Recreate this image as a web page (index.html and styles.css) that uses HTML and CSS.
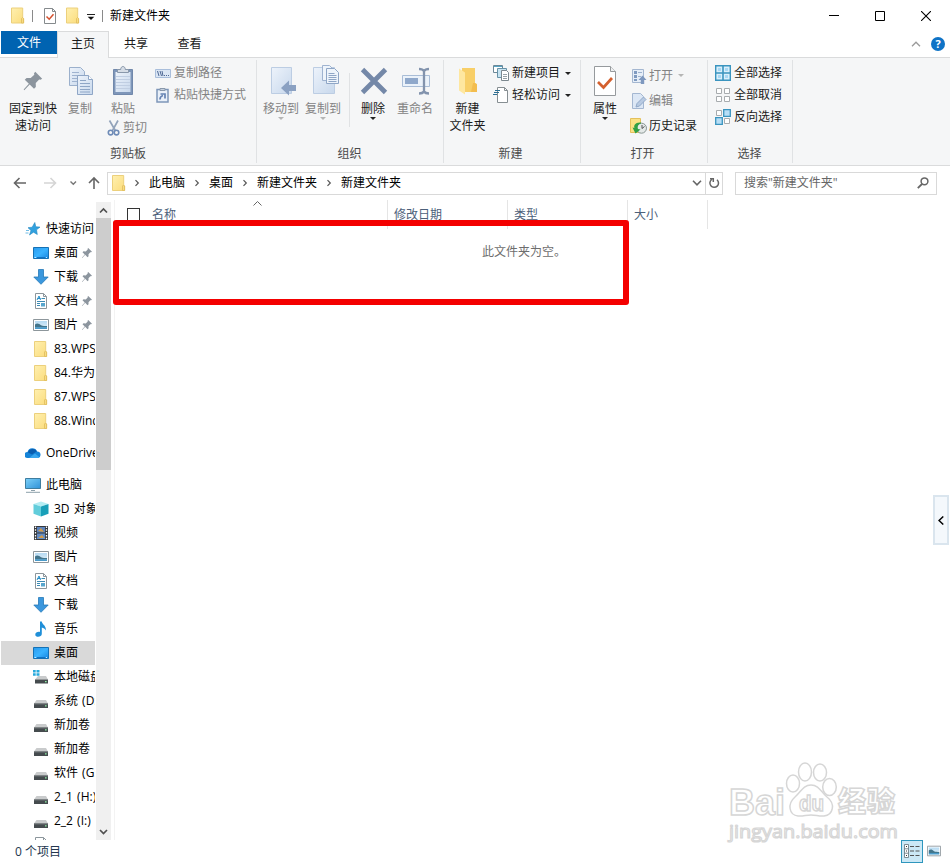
FILE: index.html
```
<!DOCTYPE html>
<html lang="zh-CN">
<head>
    <meta charset="UTF-8">
    <meta name="viewport" content="width=device-width, initial-scale=1.0">
    <title>新建文件夹</title>
    <link rel="stylesheet" href="styles.css">
</head>
<body>
    <!-- Shared icons -->
    <svg class="sprite" width="0" height="0">
        <defs>
            <linearGradient id="gFolder" x1="0" y1="0" x2="1" y2="1">
                <stop offset="0" stop-color="#fff0b0"/><stop offset="1" stop-color="#fbdc7c"/>
            </linearGradient>
            <linearGradient id="gPaper" x1="0" y1="0" x2="1" y2="1">
                <stop offset="0" stop-color="#edf3fb"/><stop offset="1" stop-color="#c8d8ec"/>
            </linearGradient>
            <linearGradient id="gScreen" x1="0" y1="0" x2="1" y2="1">
                <stop offset="0" stop-color="#2b9cee"/><stop offset=".5" stop-color="#39b2ff"/><stop offset="1" stop-color="#1786e0"/>
            </linearGradient>
            <linearGradient id="gPc" x1="0" y1="0" x2="1" y2="1">
                <stop offset="0" stop-color="#7cd0f8"/><stop offset="1" stop-color="#2f92d8"/>
            </linearGradient>
            <linearGradient id="gPic" x1="0" y1="0" x2="0" y2="1">
                <stop offset="0" stop-color="#b5daf3"/><stop offset="1" stop-color="#e6f2f8"/>
            </linearGradient>
        </defs>
        <symbol id="folder" viewBox="0 0 16 16">
            <path d="M1.500.500h11.200v10.500h1v4.500H1.500z" fill="url(#gFolder)" stroke="#ecd07c"/>
            <path d="M11.500 15.500V11l1-1 1 1v4.500z" fill="#f8dc83" stroke="#dfbd5c" stroke-width=".8"/>
        </symbol>
        <symbol id="pin" viewBox="0 0 24 24">
            <path d="M14.500 2l7.500 7.500-1.800 1.200-1.500-.4-3.700 4 .1 4.200-2 1.900-4.700-4.700L2.500 22 1.800 21.300 7.500 15 3 10.600l2-2 4.500.2 3.900-3.700-.3-1.500z" fill="#8c959e"/>
        </symbol>
        <symbol id="desktop" viewBox="0 0 16 16">
            <path d="M.5 2.500h15v11H.5z" fill="url(#gScreen)" stroke="#1571b5"/>
            <path d="M1.500 12.500h13" stroke="#c3e6ff" stroke-dasharray="1.500 1 8 1 1 .5"/>
            <path d="M4 12.500h8" stroke="#1272c4"/>
        </symbol>
        <symbol id="download" viewBox="0 0 16 16">
            <path d="M5.500.500h5V8h4.700L8 15.300.8 8h4.700z" fill="#3b97dd" stroke="#2478b8" stroke-width=".8"/>
        </symbol>
        <symbol id="document" viewBox="0 0 16 16">
            <path d="M2.500.500h8l3 3v12h-11z" fill="#fff" stroke="#8c969c"/>
            <path d="M10.500.500v3h3" fill="none" stroke="#8c969c"/>
            <path d="M4 7l2-4 1.500 4M4.500 5.500h3" fill="none" stroke="#268fc8"/>
            <path d="M8.500 5.500H12M4 8.500h8M4 10.500h3M4 12.500h3" stroke="#3d8bb4"/>
            <path d="M8 10h4v3.500H8z" fill="#57a6ce"/>
        </symbol>
        <symbol id="picture" viewBox="0 0 16 16">
            <path d="M.5 2.500h15v11H.5z" fill="#fff" stroke="#8d969b"/>
            <path d="M2 4h12v8H2z" fill="url(#gPic)"/>
            <path d="M2 7.500c2-2 4-1 6 .7 2 .8 4 .8 6 .8v1.500H2z" fill="#43758b"/>
            <path d="M2 10.200h12V12H2z" fill="#4a9ac9"/>
        </symbol>
        <symbol id="drive" viewBox="0 0 16 16">
            <path d="M3.500 7h9.500L15 10.500H1z" fill="#c9cbcc"/>
            <path d="M1 10.500h14v4.500H1z" fill="#454b4e"/>
            <path d="M1 10.500h14v1H1z" fill="#6b7072"/>
            <path d="M12 12.200h1.600v1.300H12z" fill="#8ef0a4"/>
        </symbol>
        <symbol id="sysdrive" viewBox="0 0 16 16">
            <path d="M5 7h8l2 3.500H2z" fill="#c9cbcc"/>
            <path d="M2 10.500h13v4H2z" fill="#454b4e"/>
            <path d="M12 12h1.600v1.300H12z" fill="#8ef0a4"/>
            <path d="M0 1h2.700v2.500H0zM3.500 1h3v2.500h-3zM0 4.300h2.700v2.500H0zM3.500 4.300h3v2.500h-3z" fill="#28a9dc"/>
        </symbol>
        <symbol id="pageCheck" viewBox="0 0 22 30">
            <path d="M.5.500h16l5 5v24H.5z" fill="#fff" stroke="#969a9d"/>
            <path d="M16.500.500v5h5" fill="#eef0f1" stroke="#969a9d"/>
            <path d="M4 16l5.500 5.500L18 12" fill="none" stroke="#d4602e" stroke-width="2.700"/>
        </symbol>
        <symbol id="chev" viewBox="0 0 8 8">
            <path d="M2.500 1.200L5.300 4 2.500 6.800" fill="none" stroke="#555" stroke-width="1.200"/>
        </symbol>
    </svg>

    <div class="window">
        <div class="titlebar">
            <svg class="title-folder" width="16" height="17"><use href="#folder"/></svg>
            <span class="title-sep"></span>
            <svg class="title-check" width="12" height="16" viewBox="0 0 12 16">
                <path d="M.5.500h8l3 3v12H.5z" fill="#fff" stroke="#858a8d"/>
                <path d="M8.500.500v3h3" fill="none" stroke="#858a8d"/>
                <path d="M2.500 8.500l2.700 2.700 4.300-5" fill="none" stroke="#d4502e" stroke-width="1.500"/>
            </svg>
            <svg class="title-folder2" width="16" height="17"><use href="#folder"/></svg>
            <svg class="title-more" width="8" height="7" viewBox="0 0 8 7"><path d="M0 .5h8" stroke="#222"/><path d="M.7 2.700h6.600L4 6z" fill="#111"/></svg>
            <span class="title-sep"></span>
            <span class="title-text">新建文件夹</span>
            <div class="window-buttons">
                <svg width="10" height="10" viewBox="0 0 10 10"><path d="M0 4.500h10" stroke="#000"/></svg>
                <svg width="10" height="10" viewBox="0 0 10 10"><path d="M.5.500h9v9h-9z" fill="none" stroke="#000"/></svg>
                <svg width="10" height="10" viewBox="0 0 10 10"><path d="M0 0l10 10M10 0L0 10" stroke="#000" stroke-width="1.100"/></svg>
            </div>
        </div>

        <div class="tabs">
            <span class="tab tab-file">文件</span>
            <span class="tab tab-active">主页</span>
            <span class="tab tab-share">共享</span>
            <span class="tab">查看</span>
            <div class="tabs-right">
                <svg width="10" height="6" viewBox="0 0 10 6"><path d="M1 5.200L5 1.200l4 4" fill="none" stroke="#9a9a9a" stroke-width="1.300"/></svg>
                <span class="help">?</span>
            </div>
        </div>

        <div class="ribbon">
            <div class="group group-clipboard">
                <div class="group-body">
                    <div class="big big-pin">
                        <svg width="32" height="32" viewBox="0 0 32 32"><use href="#pin" x="5" y="5" width="22" height="22"/></svg>
                        <span>固定到快<br>速访问</span>
                    </div>
                    <div class="big big-copy disabled">
                        <svg width="32" height="32" viewBox="0 0 32 32">
                            <path d="M5.500 2.500h11l4 4v14h-15z" fill="url(#gPaper)" stroke="#9bb0cc"/>
                            <path d="M8 7.500h7M8 10.500h8M8 13.500h6M8 16.500h5" stroke="#9fb3d0"/>
                            <path d="M13.500 10.500h11l4 4v15h-15z" fill="url(#gPaper)" stroke="#8fa6c6"/>
                            <path d="M24.500 10.500v4h4" fill="#fff" stroke="#8fa6c6"/>
                            <path d="M16 15.500h6M16 18.500h10M16 21.500h10M16 24.500h10M16 27h10" stroke="#8fa6c6"/>
                        </svg>
                        <span>复制</span>
                    </div>
                    <div class="paste-col disabled">
                        <div class="big">
                            <svg width="32" height="32" viewBox="0 0 32 32">
                                <path d="M6.500 4.500h19v25h-19z" fill="#7e96b9" stroke="#7188ab"/>
                                <path d="M8.500 7h15v20h-15z" fill="url(#gPaper)"/>
                                <path d="M9 11.500h14M9 14.500h14M9 17.500h14M9 20.500h14M9 23.500h14" stroke="#c0cee2"/>
                                <path d="M10.500 7.500v-3h3.200c0-4 4.600-4 4.600 0h3.200v3z" fill="#d6dde6" stroke="#8998ab"/>
                            </svg>
                            <span>粘贴</span>
                        </div>
                        <div class="small">
                            <svg width="14" height="16" viewBox="0 0 14 16" fill="none">
                                <path d="M2.500.500l5.800 10M11 .5L5.500 10.500" stroke="#92a3ba" stroke-width="1.700"/>
                                <circle cx="3.600" cy="12.600" r="2.300" stroke="#6e8bb7" stroke-width="1.600"/>
                                <circle cx="9.500" cy="12.600" r="2.300" stroke="#6e8bb7" stroke-width="1.600"/>
                            </svg>
                            <span>剪切</span>
                        </div>
                    </div>
                    <div class="small-col disabled">
                        <div class="small">
                            <svg width="16" height="16" viewBox="0 0 16 16">
                                <path d="M.5 4.500h15v8H.5z" fill="#dbe6f4" stroke="#a9bedb"/>
                                <path d="M2.500 6l1.500 5M5 6l1.500 5M7 6l1 5" stroke="#4f6995"/>
                                <path d="M9 10.500h1M11 10.500h1M13 10.500h1" stroke="#4f6995"/>
                            </svg>
                            <span>复制路径</span>
                        </div>
                        <div class="small">
                            <svg width="16" height="16" viewBox="0 0 16 16">
                                <path d="M2 2.500h11v12.500H2z" fill="#e9f0f9" stroke="#7e96b9" stroke-width="1.500"/>
                                <path d="M5 3.500V1.500h5v2z" fill="#c6d1df" stroke="#8998ab"/>
                                <path d="M5 12.500c0-2.500 1-3.500 3-4M5.500 7h4.500v4.500" fill="none" stroke="#6482b3" stroke-width="1.700"/>
                            </svg>
                            <span>粘贴快捷方式</span>
                        </div>
                    </div>
                </div>
                <div class="group-label">剪贴板</div>
            </div>

            <div class="group group-organize">
                <div class="group-body">
                    <div class="big big-move disabled">
                        <svg width="32" height="32" viewBox="0 0 32 32">
                            <path d="M6.500 2.500h20v26h-20z" fill="url(#gPaper)" stroke="#bccde3"/>
                            <path d="M16 23l8-7.500v4.500h7v6h-7v4.500z" fill="#8ba1c2"/>
                        </svg>
                        <span>移动到</span>
                        <i class="drop"></i>
                    </div>
                    <div class="big disabled">
                        <svg width="32" height="32" viewBox="0 0 32 32">
                            <path d="M6.500 2.500h21v26h-21z" fill="url(#gPaper)" stroke="#bccde3"/>
                            <path d="M15.500.500h7l3 3v12h-10z" fill="#eef4fb" stroke="#9fb3d0"/>
                            <path d="M19.500 3.500h8l4 4v11h-12z" fill="#eef4fb" stroke="#8fa6c6"/>
                            <path d="M21.500 8.500h6M21.500 10.500h8M21.500 12.500h8M21.500 14.500h8M21.500 16.500h8" stroke="#8fa6c6"/>
                        </svg>
                        <span>复制到</span>
                        <i class="drop"></i>
                    </div>
                    <span class="inner-sep"></span>
                    <div class="big">
                        <svg width="32" height="32" viewBox="0 0 32 32"><path d="M5.500 4.500l23 23M28.500 4.500L5.500 27.500" stroke="#7488a8" stroke-width="4.800"/></svg>
                        <span>删除</span>
                        <i class="drop"></i>
                    </div>
                    <div class="big big-rename disabled">
                        <svg width="32" height="32" viewBox="0 0 32 32">
                            <path d="M3.500 10.500h27v11h-27z" fill="#ebf2fa" stroke="#a9bdd7"/>
                            <path d="M6 13h13v6H6z" fill="#8fa8cb"/>
                            <path d="M20 4c3 0 4 .5 5 2 1-1.500 2-2 5-2M25 5v23M20 28.500c3 0 4-.5 5-2 1 1.500 2 2 5 2" fill="none" stroke="#8293ad" stroke-width="2.300"/>
                        </svg>
                        <span>重命名</span>
                    </div>
                </div>
                <div class="group-label">组织</div>
            </div>

            <div class="group group-new">
                <div class="group-body">
                    <div class="big big-folder">
                        <svg width="32" height="32" viewBox="0 0 32 32">
                            <path d="M10 3h13v15l2 1v8H10z" fill="#f8cf68"/>
                            <path d="M19 27l2-9h2l2 1.500V27z" fill="#f3bd4f"/>
                            <path d="M7 3.500l6 4v22l-6-4z" fill="#fee7a0"/>
                        </svg>
                        <span>新建<br>文件夹</span>
                    </div>
                    <div class="small-col">
                        <div class="small">
                            <svg width="16" height="16" viewBox="0 0 16 16">
                                <path d="M.5.500h9v7h-9z" fill="#fff" stroke="#6c8898"/>
                                <path d="M1 1.500h8" stroke="#58a5c4"/>
                                <path d="M4.500 3.500h9v9h-9z" fill="#c8e4f2" stroke="#6792a7"/>
                                <path d="M8.500 5.500h5l2 2v8h-7z" fill="#fff" stroke="#7c888f"/>
                                <path d="M10 9.500h4M10 11.500h4M10 13.500h4" stroke="#97a1a7"/>
                            </svg>
                            <span>新建项目</span>
                            <i class="drop"></i>
                        </div>
                        <div class="small">
                            <svg width="16" height="16" viewBox="0 0 16 16">
                                <path d="M4.500.500h7l3 3v12h-10z" fill="#fff" stroke="#868e92"/>
                                <path d="M11.500.500v3h3" fill="none" stroke="#868e92"/>
                                <path d="M2 3.500h5M1 5.500h5M0 7.500h4" stroke="#2d6f93" stroke-width="1.200"/>
                            </svg>
                            <span>轻松访问</span>
                            <i class="drop"></i>
                        </div>
                    </div>
                </div>
                <div class="group-label">新建</div>
            </div>

            <div class="group group-open">
                <div class="group-body">
                    <div class="big">
                        <svg width="32" height="32" viewBox="0 0 32 32"><use href="#pageCheck" x="5" y="1" width="22" height="30"/></svg>
                        <span>属性</span>
                        <i class="drop"></i>
                    </div>
                    <div class="small-col">
                        <div class="small disabled">
                            <svg width="16" height="16" viewBox="0 0 16 16">
                                <path d="M1.500 1.500h11v13h-11z" fill="#e6eef8" stroke="#a4b7d1"/>
                                <path d="M3 3h3v3H3zM3 7h3v3H3zM3 11h3v2H3z" fill="#7f9ac0"/>
                                <path d="M7 4.500h4M7 8.500h3" stroke="#9db2ce"/>
                                <path d="M11.500 7.500l4 4.500h-2.300v4H9.800v-4H7.500z" fill="#7e98bf"/>
                            </svg>
                            <span>打开</span>
                            <i class="drop"></i>
                        </div>
                        <div class="small disabled">
                            <svg width="16" height="16" viewBox="0 0 16 16">
                                <path d="M1.500.500h8l3 3v12h-11z" fill="#dce7f5" stroke="#a4b7d1"/>
                                <path d="M5 14l1-3.500L12.500 4 15 6.500 8.500 13z" fill="#b8cae2" stroke="#91a9c9"/>
                            </svg>
                            <span>编辑</span>
                        </div>
                        <div class="small">
                            <svg class="history" width="18" height="16" viewBox="0 0 18 16">
                                <path d="M.5.500h10v14H.5z" fill="#fae185" stroke="#e4c05c"/>
                                <circle cx="11.500" cy="10.200" r="5" fill="#e4e9e8" stroke="#899693"/>
                                <path d="M12 7v3.500l2.500-2" fill="none" stroke="#555"/>
                                <path d="M11 4.500C5 4 3.500 7.500 4.500 10L2.500 9.500 5.500 15.500l5-4-2.500-.5C7 8.500 8.500 6 11 5.500z" fill="#31a044"/>
                            </svg>
                            <span>历史记录</span>
                        </div>
                    </div>
                </div>
                <div class="group-label">打开</div>
            </div>

            <div class="group group-select">
                <div class="group-body">
                    <div class="small-col">
                        <div class="small">
                            <svg width="16" height="16" viewBox="0 0 16 16">
                                <path d="M.7.700h14.600v14.600H.7z" fill="#d9effb" stroke="#3a94bf" stroke-width="1.400"/>
                                <path d="M3 3h3v3H3zM10 3h3v3h-3zM3 10h3v3H3zM10 10h3v3h-3z" fill="#a8d8f4"/>
                                <path d="M8 0v16M0 8h16" stroke="#3a94bf" stroke-width="1.600"/>
                            </svg>
                            <span>全部选择</span>
                        </div>
                        <div class="small">
                            <svg width="16" height="16" viewBox="0 0 16 16"><path d="M1.500 1.500h5v5h-5zM9.500 1.500h5v5h-5zM1.500 9.500h5v5h-5zM9.500 9.500h5v5h-5z" fill="#fff" stroke="#a8acaf"/></svg>
                            <span>全部取消</span>
                        </div>
                        <div class="small">
                            <svg width="16" height="16" viewBox="0 0 16 16">
                                <path d="M1.500 1.500h5v5h-5zM9.500 9.500h5v5h-5z" fill="#fff" stroke="#a8acaf"/>
                                <path d="M8.700.700h6.600v6.600H8.700zM.7 8.700h6.600v6.600H.7z" fill="#b7def6" stroke="#3a94bf" stroke-width="1.300"/>
                            </svg>
                            <span>反向选择</span>
                        </div>
                    </div>
                </div>
                <div class="group-label">选择</div>
            </div>
        </div>

        <div class="navbar">
            <svg class="nav-arrows" width="92" height="16" viewBox="0 0 92 16" fill="none">
                <path d="M18 8H6.500M11.500 3l-5 5 5 5" stroke="#666" stroke-width="1.600"/>
                <path d="M36 8h11.500M42.500 3l5 5-5 5" stroke="#d5d5d5" stroke-width="1.600"/>
                <path d="M62.500 6.500l2.800 2.800L68 6.500" stroke="#777" stroke-width="1.400"/>
                <path d="M86 14V3M81 8l5-5 5 5" stroke="#666" stroke-width="1.600"/>
            </svg>
            <div class="address">
                <svg class="address-folder" width="16" height="16"><use href="#folder"/></svg>
                <svg class="crumb-sep" width="8" height="8"><use href="#chev"/></svg>
                <span>此电脑</span>
                <svg class="crumb-sep" width="8" height="8"><use href="#chev"/></svg>
                <span>桌面</span>
                <svg class="crumb-sep" width="8" height="8"><use href="#chev"/></svg>
                <span>新建文件夹</span>
                <svg class="crumb-sep" width="8" height="8"><use href="#chev"/></svg>
                <span>新建文件夹</span>
                <svg class="address-drop" width="10" height="6" viewBox="0 0 10 6"><path d="M1 .8l4 4 4-4" fill="none" stroke="#666" stroke-width="1.600"/></svg>
                <span class="refresh">
                    <svg width="12" height="12" viewBox="0 0 12 12" fill="none"><path d="M9 2.800A4.300 4.300 0 1 1 3.800 2.500M2 1.700h3.300V5" stroke="#666" stroke-width="1.500"/></svg>
                </span>
            </div>
            <div class="search">
                <span>搜索"新建文件夹"</span>
                <svg width="12" height="12" viewBox="0 0 12 12" fill="none"><circle cx="7.500" cy="4.300" r="3.400" stroke="#666" stroke-width="1.500"/><path d="M5 7L.8 11.200" stroke="#666" stroke-width="1.800"/></svg>
            </div>
        </div>

        <div class="main">
            <div class="sidebar">
                <div class="item item-top">
                    <svg width="16" height="16" viewBox="0 0 16 16"><path d="M9.800 1.500l1 4.300 4.200.3-3.500 2.700.8 4.700-3.800-2.300-4 2.800 1.500-4.500-3-2.800 4.200-.5z" fill="#31a1df" stroke="#2186bf" stroke-width=".6"/><path d="M1 9.500h3M.5 12h3" stroke="#70bce5"/></svg>
                    <span>快速访问</span>
                </div>
                <div class="item"><svg width="16" height="16"><use href="#desktop"/></svg><span>桌面</span><svg class="item-pin" width="12" height="12"><use href="#pin"/></svg></div>
                <div class="item"><svg width="16" height="16"><use href="#download"/></svg><span>下载</span><svg class="item-pin" width="12" height="12"><use href="#pin"/></svg></div>
                <div class="item"><svg width="16" height="16"><use href="#document"/></svg><span>文档</span><svg class="item-pin" width="12" height="12"><use href="#pin"/></svg></div>
                <div class="item"><svg width="16" height="16"><use href="#picture"/></svg><span>图片</span><svg class="item-pin" width="12" height="12"><use href="#pin"/></svg></div>
                <div class="item"><svg width="16" height="16"><use href="#folder"/></svg><span>83.WPS</span></div>
                <div class="item"><svg width="16" height="16"><use href="#folder"/></svg><span>84.华为</span></div>
                <div class="item"><svg width="16" height="16"><use href="#folder"/></svg><span>87.WPS</span></div>
                <div class="item"><svg width="16" height="16"><use href="#folder"/></svg><span>88.Wind</span></div>
                <div class="item item-top item-gap">
                    <svg width="16" height="16" viewBox="0 0 16 16"><path d="M2.500 13a3 3 0 0 1 0-6A5 5 0 0 1 12 6.500 3.300 3.300 0 0 1 13 13z" fill="#1684d8"/><path d="M3 7.500A5 5 0 0 1 12 6.300L7 9.500z" fill="#0a5daf"/><path d="M4 13l6-4.500 4.500 3.700-1.500.8z" fill="#39a6ee"/></svg>
                    <span>OneDrive</span>
                </div>
                <div class="item item-top item-gap">
                    <svg width="16" height="16" viewBox="0 0 16 16"><path d="M.5 1.500h15v10H.5z" fill="url(#gPc)" stroke="#3f7d9f"/><path d="M6 13.500h4M1 15.300h14" stroke="#8da0aa"/></svg>
                    <span>此电脑</span>
                </div>
                <div class="item">
                    <svg width="16" height="16" viewBox="0 0 16 16"><path d="M8 .5L15.500 3 8 5.500.5 3z" fill="#b4edf3"/><path d="M.5 3L8 5.500v10L.5 12.800z" fill="#62cddb"/><path d="M15.500 3L8 5.500v10l7.500-2.700z" fill="#189fb8"/></svg>
                    <span>3D 对象</span>
                </div>
                <div class="item">
                    <svg width="16" height="16" viewBox="0 0 16 16"><path d="M1 1h14v14H1z" fill="#36383b"/><path d="M4 2h8v5.500H4z" fill="#5b83bd"/><path d="M4 8.500h8V14H4z" fill="#638cc4"/><path d="M5 6l3-3 3 4zM5 13l4-3 2 3z" fill="#d39b48"/><path d="M2.500 1.500v13M13.500 1.500v13" stroke="#fff" stroke-width="1.300" stroke-dasharray="1.500 1.300"/></svg>
                    <span>视频</span>
                </div>
                <div class="item"><svg width="16" height="16"><use href="#picture"/></svg><span>图片</span></div>
                <div class="item"><svg width="16" height="16"><use href="#document"/></svg><span>文档</span></div>
                <div class="item"><svg width="16" height="16"><use href="#download"/></svg><span>下载</span></div>
                <div class="item">
                    <svg width="16" height="16" viewBox="0 0 16 16"><path d="M7 .5h1.800C9 3.500 13.500 4.500 12.800 9.500 12 7.500 10.500 7 8.800 6.500V13c0 3.500-6.500 3.700-6.500.7 0-2.200 2.500-3.200 4.700-2.700z" fill="#1f8fd8"/></svg>
                    <span>音乐</span>
                </div>
                <div class="item selected"><svg width="16" height="16"><use href="#desktop"/></svg><span>桌面</span></div>
                <div class="item"><svg width="16" height="16"><use href="#sysdrive"/></svg><span>本地磁盘</span></div>
                <div class="item"><svg width="16" height="16"><use href="#drive"/></svg><span>系统 (D:)</span></div>
                <div class="item"><svg width="16" height="16"><use href="#drive"/></svg><span>新加卷</span></div>
                <div class="item"><svg width="16" height="16"><use href="#drive"/></svg><span>新加卷</span></div>
                <div class="item"><svg width="16" height="16"><use href="#drive"/></svg><span>软件 (G:)</span></div>
                <div class="item"><svg width="16" height="16"><use href="#drive"/></svg><span>2_1 (H:)</span></div>
                <div class="item"><svg width="16" height="16"><use href="#drive"/></svg><span>2_2 (I:)</span></div>
                <div class="item"><svg width="16" height="16"><use href="#document"/></svg></div>
            </div>
            <div class="scrollbar">
                <svg width="15" height="16" viewBox="0 0 15 16"><path d="M4 10.500L7.500 7l3.500 3.500" fill="none" stroke="#505050" stroke-width="1.700"/></svg>
                <div class="thumb"></div>
                <svg class="scroll-down" width="15" height="16" viewBox="0 0 15 16"><path d="M4 6L7.500 9.500 11 6" fill="none" stroke="#505050" stroke-width="1.700"/></svg>
            </div>
            <div class="content">
                <div class="columns">
                    <div class="column col-name">
                        <span class="checkbox"></span>名称
                        <svg class="sort" width="9" height="5" viewBox="0 0 9 5"><path d="M.5 4.500l4-4 4 4" fill="none" stroke="#666"/></svg>
                    </div>
                    <div class="column col-date">修改日期</div>
                    <div class="column col-type">类型</div>
                    <div class="column col-size">大小</div>
                </div>
                <p class="empty">此文件夹为空。</p>
                <div class="highlight"></div>
            </div>
        </div>

        <div class="statusbar">
            <span>0 个项目</span>
            <div class="views">
                <span class="view-details">
                    <svg width="16" height="14" viewBox="0 0 16 14"><path d="M.5.500h4v13h-4zM.5 4.800h4M.5 9.200h4" fill="#fff" stroke="#6e7f88" stroke-width=".9"/><path d="M2 2.500h1M2 7h1M2 11.500h1" stroke="#333"/><path d="M6 2.500h4M11.500 2.500h4M6 7h4M11.500 7h4M6 11.500h4M11.500 11.500h4" stroke="#555"/></svg>
                </span>
                <svg width="14" height="14"><use href="#picture"/></svg>
            </div>
        </div>

        <div class="side-handle">
            <svg width="6" height="9" viewBox="0 0 6 9"><path d="M5.300.500L1 4.500l4.300 4" fill="none" stroke="#000" stroke-width="1.500"/></svg>
        </div>

        <svg class="watermark" width="180" height="90" viewBox="0 0 180 90">
            <g fill="#fff" stroke="#d6d6d6" stroke-width="1.500">
                <text class="wm-bold" x="7" y="55" font-size="36" textLength="56" lengthAdjust="spacingAndGlyphs">Bai</text>
                <ellipse cx="71" cy="23.500" rx="6.500" ry="8.500"/>
                <ellipse cx="83" cy="12" rx="6.500" ry="9"/>
                <ellipse cx="98" cy="12.500" rx="6.500" ry="8.500"/>
                <ellipse cx="107.500" cy="27" rx="6.800" ry="8.500"/>
                <path d="M89 25c8 0 10 7 16 12 9 7 6 18-3 19-5 .5-8-1-13-1s-8 1.500-13 1c-9-1-11-12-3-19 6-5 8-12 16-12z"/>
                <text class="wm-bold" x="77" y="51" font-size="22" textLength="25" lengthAdjust="spacingAndGlyphs">du</text>
                <text class="wm-cjk" x="116" y="52" font-size="28" textLength="57">经验</text>
                <text class="wm-url" x="7" y="78" font-size="19" textLength="169" lengthAdjust="spacingAndGlyphs" stroke-width="1.200">jingyan.baidu.com</text>
            </g>
        </svg>
    </div>
</body>
</html>
```
FILE: styles.css
```
* {
    margin: 0;
    padding: 0;
    box-sizing: border-box;
}

body {
    font-family: "Open Sans", "Noto Sans CJK SC", sans-serif;
    font-size: 12px;
    line-height: 17px;
    color: #1a1a1a;
    background: #fff;
    overflow: hidden;
}

svg {
    display: block;
    flex: none;
}

.sprite {
    position: absolute;
}

.window {
    position: relative;
    width: 950px;
    height: 864px;
    display: flex;
    flex-direction: column;
    white-space: nowrap;
    overflow: hidden;
}

/* Title bar */
.titlebar {
    height: 31px;
    display: flex;
    align-items: center;
    padding-left: 10px;
    color: #000;
}

.title-folder {
    margin-right: 6px;
}

.title-sep {
    width: 1px;
    height: 12px;
    background: #8a8a8a;
}

.title-check {
    margin: 0 9px 0 11px;
}

.title-folder2 {
    margin-right: 6px;
}

.title-more {
    margin: 3px 7px 0 0;
}

.title-text {
    margin-left: 7px;
}

.window-buttons {
    display: flex;
    gap: 36px;
    margin-left: auto;
    padding-right: 19px;
}

/* Tabs */
.tabs {
    height: 27px;
    display: flex;
    border-bottom: 1px solid #dadbdc;
    padding-left: 1px;
}

.tab {
    line-height: 25px;
    text-align: center;
    width: 53px;
}

.tab-file {
    width: 56px;
    height: 23px;
    line-height: 24px;
    color: #fff;
    background: #0063b1;
}

.tab-active {
    width: 52px;
    height: 27px;
    background: #f5f6f7;
    border: 1px solid #dadbdc;
    border-bottom: none;
    line-height: 23px;
}

.tab-share {
    width: 54px;
}

.tabs-right {
    display: flex;
    align-items: center;
    gap: 10px;
    margin-left: auto;
    padding-right: 5px;
}

.help {
    width: 14px;
    height: 14px;
    border-radius: 50%;
    background: #0f73c6;
    color: #fff;
    font-weight: 700;
    font-size: 11px;
    line-height: 14px;
    text-align: center;
}

/* Ribbon */
.ribbon {
    height: 108px;
    display: flex;
    background: #f5f6f7;
    border-bottom: 1px solid #dadbdc;
}

.group {
    height: 103px;
    margin-top: 2px;
    border-right: 1px solid #e0e2e4;
    display: flex;
    flex-direction: column;
}

.group-clipboard { width: 257px; padding-left: 7px; }
.group-organize { width: 187px; padding-left: 4px; }
.group-new { width: 137px; }
.group-open { width: 127px; padding-left: 2px; }
.group-select { width: 85px; padding-left: 7px; }

.group-body {
    display: flex;
    height: 85px;
}

.group-label {
    text-align: center;
    color: #4a4a4a;
}

.group-clipboard .group-label { padding-right: 7px; }
.group-organize .group-label { padding-right: 5px; }
.group-new .group-label { padding-right: 3px; }
.group-open .group-label { padding-right: 5px; }
.group-select .group-label { padding-right: 8px; }

.big {
    width: 44px;
    display: flex;
    flex-direction: column;
    align-items: center;
    text-align: center;
    padding-top: 5px;
}

.big span {
    margin-top: 3px;
}

.big-pin { width: 52px; }
.big-copy { width: 42px; }
.big-move { width: 40px; }
.big-rename { width: 40px; }

.big-folder {
    width: 49px;
    padding-right: 2px;
}

.disabled {
    color: #838383;
}

.drop {
    flex: none;
    border: 3px solid transparent;
    border-top-color: #222;
    border-bottom: none;
}

.disabled .drop {
    border-top-color: #b5b5b5;
}

.paste-col {
    width: 54px;
}

.paste-col .small {
    height: 22px;
    margin-left: 6px;
}

.small-col {
    padding-top: 2px;
}

.small {
    height: 22px;
    display: flex;
    align-items: center;
    gap: 2px;
}

.small span {
    margin-bottom: 1px;
}

.small .drop {
    margin-left: 3px;
}

.group-clipboard .small-col .small span,
.group-new .small span,
.group-select .small span {
    margin: 0 0 2px 1px;
}

.group-open .small-col {
    padding: 3px 0 0 4px;
}

.group-open .small {
    height: 25px;
}

.history {
    margin: 0 -1px;
}

.inner-sep {
    width: 1px;
    height: 54px;
    margin: 13px 1px 0 4px;
    background: #e0e2e4;
}

/* Address row */
.navbar {
    height: 34px;
    display: flex;
    align-items: center;
    padding-left: 8px;
}

.navbar span {
    margin-bottom: 1px;
}

.nav-arrows {
    margin-right: 7px;
}

.address {
    width: 616px;
    height: 23px;
    border: 1px solid #d9d9d9;
    display: flex;
    align-items: center;
    padding-left: 3px;
    color: #000;
}

.crumb-sep {
    margin: 0 8px;
}

.address-folder {
    margin-right: -2px;
}

.address-drop {
    margin-left: auto;
    margin-right: 3px;
}

.navbar .refresh {
    height: 21px;
    width: 17px;
    margin-bottom: 0;
    border-left: 1px solid #d9d9d9;
    display: flex;
    align-items: center;
    justify-content: center;
}

.search {
    width: 202px;
    height: 23px;
    margin-left: 12px;
    border: 1px solid #d9d9d9;
    display: flex;
    align-items: center;
    justify-content: space-between;
    padding: 0 7px 0 8px;
    color: #666;
}

/* Main area */
.main {
    flex: 1;
    min-height: 0;
    display: flex;
}

.sidebar {
    width: 95px;
    margin: 1px 1px 0 0;
    padding-top: 16px;
    overflow: hidden;
    color: #000;
}

.item {
    height: 24px;
    margin-left: 1px;
    padding-left: 32px;
    display: flex;
    align-items: center;
    gap: 5px;
}

.item span {
    margin-bottom: 2px;
    word-spacing: 1px;
}

.item-top {
    padding-left: 24px;
}

.item-gap {
    margin-top: 8px;
}

.item-pin {
    margin-left: -2px;
}

.selected {
    background: #d9d9d9;
}

.scrollbar {
    width: 15px;
    margin-top: 2px;
    background: #f0f0f0;
    display: flex;
    flex-direction: column;
}

.thumb {
    height: 252px;
    background: #cdcdcd;
}

.scroll-down {
    margin-top: auto;
}

.content {
    flex: 1;
    position: relative;
    margin-left: 3px;
    border-left: 1px solid #f3f3f3;
}

.columns {
    display: flex;
    height: 29px;
    color: #4c607a;
}

.column {
    position: relative;
    border-right: 1px solid #e5e5e5;
    line-height: 29px;
    padding-left: 6px;
}

.col-name {
    width: 273px;
    padding-left: 12px;
    display: flex;
    align-items: center;
}

.col-date { width: 120px; }
.col-type { width: 120px; }
.col-size { width: 80px; }

.checkbox {
    width: 13px;
    height: 13px;
    border: 1px solid #333;
    margin-right: 12px;
}

.sort {
    position: absolute;
    left: 138px;
    top: 1px;
}

.empty {
    width: 812px;
    margin-top: 14px;
    padding-left: 367px;
    color: #6d6d6d;
}

/* Red frame drawn over the file list */
.highlight {
    position: absolute;
    left: -2px;
    top: 20px;
    width: 516px;
    height: 85px;
    border: 6px solid #f40000;
    border-radius: 3px;
}

/* Status bar */
.statusbar {
    height: 24px;
    display: flex;
    align-items: center;
    justify-content: space-between;
    padding: 0 9px 2px 15px;
    color: #24374f;
}

.views {
    display: flex;
    align-items: center;
    gap: 4px;
}

.view-details {
    width: 22px;
    height: 23px;
    border: 1px solid #2e96bd;
    background: #cbe8f6;
    display: flex;
    align-items: center;
    justify-content: center;
}

.side-handle {
    position: absolute;
    left: 933px;
    top: 495px;
    width: 16px;
    height: 50px;
    border: 2px solid #dae5ee;
    background: #f4f8fc;
    display: flex;
    align-items: center;
    justify-content: center;
}

.watermark {
    position: absolute;
    left: 722px;
    top: 760px;
}

.wm-bold {
    font-family: "Liberation Sans", sans-serif;
    font-weight: 700;
}

.wm-cjk {
    font-family: "Noto Sans CJK SC", sans-serif;
    font-weight: 900;
}

.wm-url {
    font-family: "Open Sans", sans-serif;
}
```
